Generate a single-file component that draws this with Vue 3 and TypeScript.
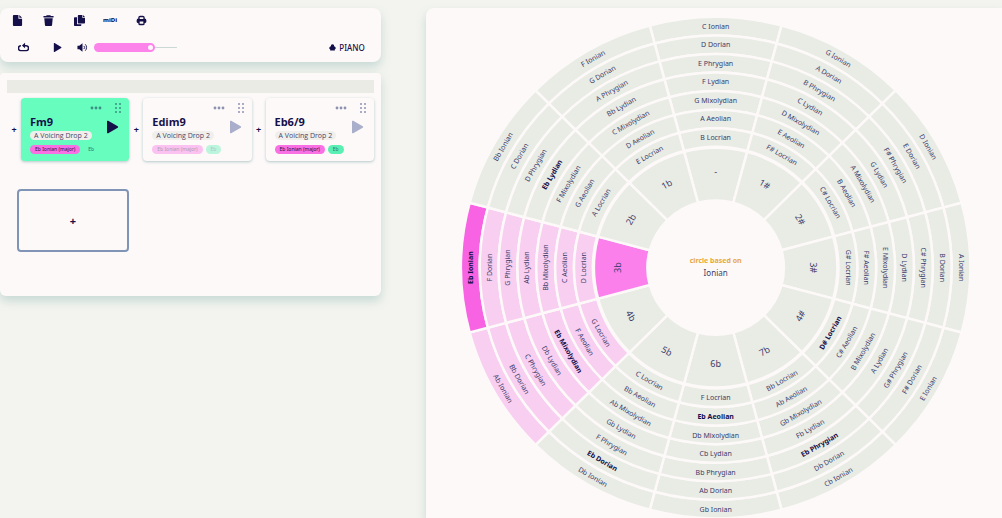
<script setup lang="ts">
import { computed, ref } from 'vue'

interface Chord {
  name: string
  voicing: string
  scale: string
  key: string
  state: 'active' | 'faded' | 'normal'
}

const chords: Chord[] = [
  { name: 'Fm9', voicing: 'A Voicing Drop 2', scale: 'Eb Ionian (major)', key: 'Eb', state: 'active' },
  { name: 'Edim9', voicing: 'A Voicing Drop 2', scale: 'Eb Ionian (major)', key: 'Eb', state: 'faded' },
  { name: 'Eb6/9', voicing: 'A Voicing Drop 2', scale: 'Eb Ionian (major)', key: 'Eb', state: 'normal' },
]

const volume = ref(70)
const fillStyle = computed(() => ({ '--level': String(volume.value / 100) }))

// Circle of fifths: each sector lists its modes from the outer ring inwards
const modes = ['Ionian', 'Dorian', 'Phrygian', 'Lydian', 'Mixolydian', 'Aeolian', 'Locrian']
const sectors = [
  { hub: '-', notes: 'C D E F G A B' },
  { hub: '1#', notes: 'G A B C D E F#' },
  { hub: '2#', notes: 'D E F# G A B C#' },
  { hub: '3#', notes: 'A B C# D E F# G#' },
  { hub: '4#', notes: 'E F# G# A B C# D#' },
  { hub: '7b', notes: 'Cb Db Eb Fb Gb Ab Bb' },
  { hub: '6b', notes: 'Gb Ab Bb Cb Db Eb F' },
  { hub: '5b', notes: 'Db Eb F Gb Ab Bb C' },
  { hub: '4b', notes: 'Ab Bb C Db Eb F G' },
  { hub: '3b', notes: 'Eb F G Ab Bb C D' },
  { hub: '2b', notes: 'Bb C D Eb F G A' },
  { hub: '1b', notes: 'F G A Bb C D E' },
]

const CX = 254
const CY = 250
const RATIO = CX / CY
const OUTER = 250
const RING = 18.5
const HUB_OUTER = OUTER - RING * 7 - 1
const HUB_INNER = 67

function point(radius: number, degrees: number): [number, number] {
  const a = (degrees * Math.PI) / 180
  return [CX + radius * RATIO * Math.sin(a), CY - radius * Math.cos(a)]
}

function segment(outer: number, inner: number, mid: number): string {
  const p = (r: number, d: number) => point(r, d).map((n) => n.toFixed(2)).join(' ')
  const from = mid - 15
  const to = mid + 15
  return `M${p(outer, from)}A${outer * RATIO} ${outer} 0 0 1 ${p(outer, to)}L${p(inner, to)}A${inner * RATIO} ${inner} 0 0 0 ${p(inner, from)}Z`
}

function label(radius: number, mid: number): string {
  const [x, y] = point(radius, mid)
  let turn = mid
  if (mid > 90 && mid < 270) turn = mid - 180
  return `translate(${x.toFixed(2)} ${y.toFixed(2)}) rotate(${turn})`
}

const cells = sectors.flatMap((sector, s) => {
  const mid = s * 30
  const notes = sector.notes.split(' ')
  const rings = notes.map((note, r) => ({
    id: `${s}-${r}`,
    path: segment(OUTER - r * RING, OUTER - (r + 1) * RING, mid),
    place: label(OUTER - 9 - r * RING, mid),
    text: `${note} ${modes[r]}`,
    tone: s === 9 && r === 0 ? 'root' : s === 9 || s === 8 ? 'near' : 'plain',
    strong: note === 'Eb' || note === 'D#',
    hub: false,
  }))
  return [
    ...rings,
    {
      id: `${s}-hub`,
      path: segment(HUB_OUTER, HUB_INNER, mid),
      place: label(96, mid),
      text: sector.hub,
      tone: s === 9 ? 'key' : 'plain',
      strong: false,
      hub: true,
    },
  ]
})
</script>

<template>
  <main class="page">
    <div class="side">
      <section class="panel tools">
        <div class="tool-row">
          <button class="tool" aria-label="New file">
            <svg class="icon" viewBox="0 0 12 12"><path d="M2 0h5v4h4v7a1 1 0 0 1-1 1H2a1 1 0 0 1-1-1V1a1 1 0 0 1 1-1zM8 0l3 3H8z" /></svg>
          </button>
          <button class="tool" aria-label="Delete">
            <svg class="icon" viewBox="0 0 12 12"><path d="M4 .3h4l.6.9H11.500v1.500H.5V1.200h2.900zM1.400 3.500h9.200l-.7 7.500a1 1 0 0 1-1 1H3.100a1 1 0 0 1-1-1z" /></svg>
          </button>
          <button class="tool" aria-label="Copy">
            <svg class="icon" viewBox="0 0 12 12"><path d="M5 0h4v3h3v5.500a.8.8 0 0 1-.8.8H5a.8.8 0 0 1-.8-.8V.8A.8.8 0 0 1 5 0zM9.700 0L12 2.300H9.700zM.8 2.500h2.500v6.700a1 1 0 0 0 1 1H8v1a.8.8 0 0 1-.8.800H.8a.8.8 0 0 1-.8-.8V3.300a.8.8 0 0 1 .8-.8z" /></svg>
          </button>
          <button class="tool midi">miDi</button>
          <button class="tool" aria-label="Print">
            <svg class="icon" viewBox="0 0 12 12"><path fill-rule="evenodd" d="M4.500.8h3a2 2 0 0 1 2 2v1A2 2 0 0 1 11.300 5.700v1.500a1.500 1.500 0 0 1-1.800 1.500v.5a2 2 0 0 1-2 2h-3a2 2 0 0 1-2-2v-.5A1.500 1.500 0 0 1 .7 7.200V5.700a2 2 0 0 1 1.800-1.900v-1a2 2 0 0 1 2-2zM4 2.500v1.800h4V2.500zM4 7v2.500h4V7z" /></svg>
          </button>
        </div>
        <div class="tool-row transport">
          <button class="tool" aria-label="Loop">
            <svg class="icon" viewBox="0 0 12 12"><path class="line" d="M3.200 4H3a2.500 2.700 0 0 0 0 5.400h6A2.500 2.700 0 0 0 9 4H5.500" /><path d="M7.700.9v6L4.300 3.900z" /></svg>
          </button>
          <button class="tool" aria-label="Play">
            <svg class="icon" viewBox="0 0 12 12"><path d="M2 1.500v9a.5.5 0 0 0 .8.4l7.200-4.400a.6.6 0 0 0 0-1L2.800 1.100a.5.500 0 0 0-.8.4z" /></svg>
          </button>
          <label class="volume">
            <svg class="icon" viewBox="0 0 12 12" role="img" aria-label="Volume"><path d="M.5 4h2L6 1.300v9.400L2.500 8h-2z" /><path class="thin" d="M7.500 4.300a2.400 2.400 0 0 1 0 3.400M9 2.500a5 5 0 0 1 0 7" /></svg>
            <input v-model.number="volume" class="range" type="range" min="0" max="100" :style="fillStyle" />
          </label>
          <button class="instrument">
            <svg class="leaf" viewBox="0 0 12 12"><path d="M6 .5c2 0 3 1.500 2.600 3.300C10.500 4 11.500 5.500 11.500 7.200c0 1-.5 1.600-1.500 1.800v2H2V9C1 8.800.5 8.200.5 7.200.500 5.500 1.500 4 3.400 3.800 3 2 4 .5 6 .5z" /></svg>
            PIANO
          </button>
        </div>
      </section>

      <section class="panel board">
        <div class="bar"></div>
        <div class="chords">
          <div v-for="chord in chords" :key="chord.name" class="slot">
            <button class="plus" aria-label="Insert chord">+</button>
            <article class="chord" :class="chord.state">
              <div class="handles">
                <button aria-label="More">
                  <svg class="dots" viewBox="0 0 12 4"><circle cx="2" cy="2" r="1.400" /><circle cx="6" cy="2" r="1.400" /><circle cx="10" cy="2" r="1.400" /></svg>
                </button>
                <button aria-label="Move">
                  <svg class="grip" viewBox="0 0 6 10"><g v-for="y in [1, 5, 9]" :key="y"><circle cx="1" :cy="y" r="1" /><circle cx="5" :cy="y" r="1" /></g></svg>
                </button>
              </div>
              <div class="body">
                <div class="info">
                  <h2 class="name">{{ chord.name }}</h2>
                  <span class="voicing">{{ chord.voicing }}</span>
                </div>
                <button aria-label="Play chord">
                  <svg class="play" viewBox="0 0 13 14"><path d="M1 1.500v11a.8.8 0 0 0 1.200.7l9.500-5.500a.8.8 0 0 0 0-1.400L2.200.8A.8.8 0 0 0 1 1.500z" /></svg>
                </button>
              </div>
              <div class="tags">
                <span class="tag scale">{{ chord.scale }}</span>
                <span class="tag key">{{ chord.key }}</span>
              </div>
            </article>
          </div>
        </div>
        <button class="add" aria-label="Add chord">+</button>
      </section>
    </div>

    <section class="panel circle">
      <svg class="wheel" viewBox="0 0 508 500">
        <g v-for="cell in cells" :key="cell.id">
          <path class="cell" :class="cell.tone" :d="cell.path" />
          <text class="mode" :class="{ strong: cell.strong, hub: cell.hub }" :transform="cell.place" dy="0.360em">{{ cell.text }}</text>
        </g>
        <text class="caption" x="254" y="245">circle based on</text>
        <text class="base" x="254" y="258">Ionian</text>
      </svg>
    </section>
  </main>
</template>

<style>
body {
  margin: 0;
  background: #f3f4ef;
}
</style>

<style scoped>
.page {
  display: grid;
  grid-template-columns: 38% 1fr;
  column-gap: 45px;
  height: 100vh;
  box-sizing: border-box;
  padding-top: 8px;
  overflow: hidden;
  color: #15104a;
  font-family: "Noto Sans", "Open Sans", sans-serif;
}
button {
  display: flex;
  align-items: center;
  justify-content: center;
  margin: 0;
  padding: 0;
  border: 0;
  background: none;
  color: inherit;
  font: inherit;
  cursor: pointer;
}
svg {
  display: block;
  fill: currentColor;
}
.panel {
  background: #fdf9f9;
  box-shadow: 0 5px 10px rgba(120, 170, 165, 0.35);
}
.side {
  display: flex;
  flex-direction: column;
  gap: 11px;
}
.tools {
  display: flex;
  flex-direction: column;
  gap: 11px;
  padding: 4px 16px 7px 8px;
  border-radius: 8px;
}
.tool-row {
  display: flex;
  align-items: center;
  gap: 13px;
  height: 16px;
}
.tool {
  width: 18px;
  height: 16px;
}
.icon {
  width: 11px;
  height: 11px;
}
.midi {
  font-size: 6px;
  font-weight: 800;
}
.line {
  fill: none;
  stroke: currentColor;
  stroke-width: 1.6;
}
.thin {
  fill: none;
  stroke: currentColor;
  stroke-width: 1;
}
.transport {
  padding-left: 6px;
  gap: 16px;
}
.volume {
  display: flex;
  align-items: center;
  gap: 6px;
  margin-left: -5px;
}
.range {
  appearance: none;
  width: 83px;
  height: 9px;
  margin: 0;
  border-radius: 5px;
  background:
    linear-gradient(#fb83ea, #fb83ea) 0 0 / calc(5px + 74px * var(--level)) 9px no-repeat,
    linear-gradient(#ccd8d6, #ccd8d6) 0 4px / 100% 1px no-repeat;
}
.range::-webkit-slider-thumb {
  appearance: none;
  box-sizing: border-box;
  width: 9px;
  height: 9px;
  border: 2px solid #fb83ea;
  border-radius: 50%;
  background: #fff5fd;
}
.instrument {
  gap: 3px;
  margin-left: auto;
  font-size: 8px;
  font-weight: 500;
}
.leaf {
  width: 7px;
  height: 7px;
}
.board {
  box-sizing: border-box;
  height: 223px;
  padding: 7px;
  border-radius: 4px 4px 6px 6px;
}
.bar {
  height: 13px;
  background: #ebebe6;
}
.chords {
  display: grid;
  grid-template-columns: repeat(3, 1fr);
  margin-top: 5px;
}
.slot {
  display: flex;
}
.plus {
  width: 14px;
  font-size: 9px;
  font-weight: 700;
}
.chord {
  flex: 1;
  box-sizing: border-box;
  height: 63px;
  padding: 5px 8px 0 9px;
  border-radius: 4px;
  box-shadow: 0 1px 3px rgba(90, 140, 140, 0.45);
}
.handles {
  display: flex;
  align-items: center;
  justify-content: flex-end;
  gap: 13px;
  height: 10px;
  color: #8c92b0;
}
.dots {
  width: 12px;
  height: 4px;
}
.grip {
  width: 6px;
  height: 10px;
}
.body {
  display: flex;
  align-items: center;
  justify-content: space-between;
}
.name {
  margin: 0;
  font-family: "Open Sans", sans-serif;
  font-size: 11px;
  line-height: 16px;
  font-weight: 700;
}
.info {
  height: 27px;
  padding-top: 1px;
}
.voicing {
  display: block;
  margin-top: 1px;
  padding: 0 4px;
  border-radius: 5px;
  background: #f1efeb;
  color: #45476b;
  font-family: "Open Sans", sans-serif;
  font-size: 7px;
  line-height: 9px;
  white-space: nowrap;
}
.play {
  width: 13px;
  height: 14px;
  margin-right: 2px;
  color: #a9aeca;
}
.tags {
  display: flex;
  gap: 3px;
  margin-top: 4px;
}
.tag {
  padding: 0 5px;
  border-radius: 5px;
  font-size: 5px;
  line-height: 9px;
  white-space: nowrap;
}
.scale {
  background: #f96fe4;
}
.key {
  background: #5af0b4;
  color: #32746f;
}
.active {
  background: #66fdbe;
}
.active .handles {
  color: #3f8d83;
}
.active .play {
  color: #15104a;
}
.active .key {
  background: none;
}
.faded .tags {
  opacity: 0.4;
}
.add {
  box-sizing: border-box;
  width: 30.5%;
  height: 63px;
  margin: 28px 0 0 10px;
  border: 2px solid #8095b6;
  border-radius: 4px;
  font-size: 11px;
  font-weight: 700;
}
.circle {
  display: flex;
  justify-content: center;
  align-items: flex-start;
  padding: 9px 0 0 4px;
  border-radius: 8px 0 0 0;
}
.wheel {
  width: 89%;
  height: auto;
}
.cell {
  fill: #e9ebe5;
  stroke: #fdf9f9;
  stroke-width: 2.5;
}
.cell.near {
  fill: #f8cef1;
}
.cell.root {
  fill: #f763e3;
}
.cell.key {
  fill: #fb80ec;
}
.mode {
  fill: #3a3d6b;
  font-size: 7px;
  text-anchor: middle;
}
.mode.strong {
  fill: #15104a;
  font-weight: 700;
}
.mode.hub {
  font-size: 9px;
}
.caption,
.base {
  text-anchor: middle;
  fill: #e8a93c;
  font-size: 7px;
  font-weight: 700;
}
.base {
  fill: #3a3d6b;
  font-size: 8px;
  font-weight: 400;
}
</style>
